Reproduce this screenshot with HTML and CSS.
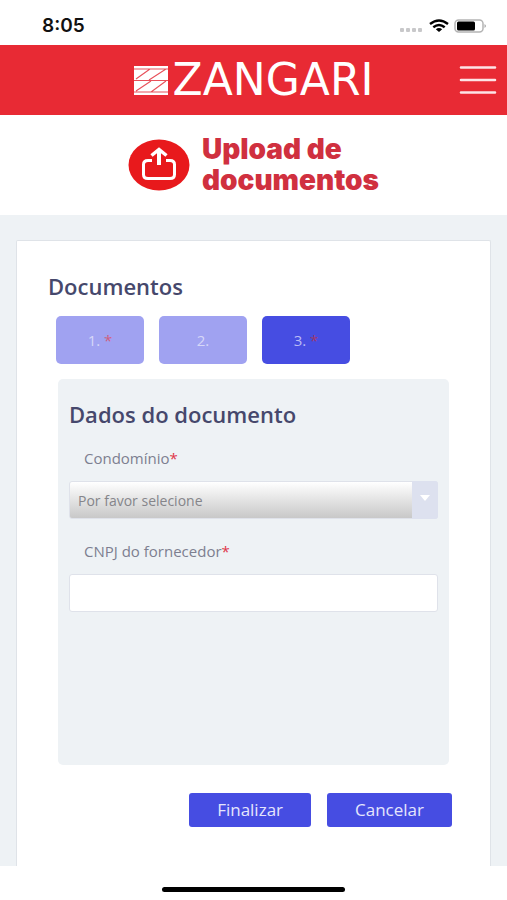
FILE: index.html
```html
<!DOCTYPE html>
<html lang="pt-BR">
<head>
<meta charset="utf-8">
<meta name="viewport" content="width=device-width, initial-scale=1">
<title>Upload de documentos</title>
<link rel="stylesheet" href="styles.css">
</head>
<body>
<div class="status">
  <span class="time">8:05</span>
  <div class="indicators">
    <svg width="24" height="5" viewBox="0 0 24 5" fill="#c8c8ca" aria-hidden="true"><rect x="0" width="4" height="4" rx="1"/><rect x="6" width="4" height="4" rx="1"/><rect x="12" width="4" height="4" rx="1"/><rect x="18" width="4" height="4" rx="1"/></svg>
    <svg class="wifi" width="20" height="14" viewBox="0 0 20 14" fill="none" stroke="#000" stroke-width="2.4" aria-hidden="true"><path d="M1 5Q10-2 19 5M4.3 8.2Q10 3.6 15.7 8.2"/><path d="M6.8 10.3Q10 7.8 13.2 10.3L10 13Z" fill="#000" stroke="none"/></svg>
    <svg width="33" height="14" viewBox="0 0 33 14" aria-hidden="true"><rect x="1" y="1" width="28" height="12" rx="3.5" fill="#fff" stroke="#b4b4b4" stroke-width="1.5"/><rect x="3" y="2.5" width="18" height="9" rx="1.5" fill="#000"/><path d="M30.5 5q3 2 0 4z" fill="#aaa"/></svg>
  </div>
</div>
<header class="header">
  <a class="logo" href="#">
    <svg width="34" height="29" viewBox="0 0 34 29" aria-hidden="true"><path fill="#fff" d="M0 0h34v29H0z"/><path d="M0 3h34M0 14.5h34M0 26h34M2 13L16 3M15 14L32 3M2 25L17 15M17 26L32 15" fill="none" stroke="#e8505a" stroke-width="1.1"/></svg>
    <span>ZANGARI</span>
  </a>
  <button class="menu" type="button" aria-label="Menu">
    <svg width="38" height="30" viewBox="0 0 38 30" stroke="#fde4e6" stroke-width="2.6" stroke-linecap="round" aria-hidden="true"><path d="M2 2.5h34M2 15h34M2 27.5h34"/></svg>
  </button>
</header>
<section class="hero">
  <svg width="62" height="52" viewBox="0 0 62 52" fill="none" stroke="#fff" aria-hidden="true"><ellipse cx="31" cy="26" rx="30.5" ry="25.5" fill="#e8191c" stroke="none"/><path d="M24 21.5h-4q-4.500 0-4.500 4v10q0 4 4.500 4h22q4.500 0 4.500-4v-10q0-4-4.500-4h-4" stroke-width="3"/><path d="M31 26V11" stroke-width="4"/><path d="M23.5 16.5L31 10.5l7.500 6" stroke-width="3.5"/></svg>
  <h1>Upload de<br>documentos</h1>
</section>
<main class="page">
  <form class="card">
    <h2>Documentos</h2>
    <div class="tabs">
      <button class="tab" type="button">1. <i>*</i></button>
      <button class="tab" type="button">2.</button>
      <button class="tab active" type="button">3. <i>*</i></button>
    </div>
    <section class="panel">
      <h2>Dados do documento</h2>
      <label for="condo">Condomínio<i>*</i></label>
      <div class="select">
        <select id="condo"><option>Por favor selecione</option></select>
        <span class="arrow"><svg width="10" height="6" viewBox="0 0 10 6" aria-hidden="true"><path fill="#fff" d="M0 0h10L5 6z"/></svg></span>
      </div>
      <label for="cnpj">CNPJ do fornecedor<i>*</i></label>
      <input id="cnpj" type="text">
    </section>
    <div class="actions">
      <button type="submit">Finalizar</button>
      <button type="button">Cancelar</button>
    </div>
  </form>
</main>
<footer class="home"><span></span></footer>
</body>
</html>
```
FILE: styles.css
```css
* { box-sizing: border-box; }
body {
  margin: 0;
  min-height: 100vh;
  display: flex;
  flex-direction: column;
  background: #fff;
  font-family: "Open Sans", sans-serif;
}
h1, h2 { margin: 0; }
button, input, select { font: inherit; }
i { font-style: normal; color: #e0354a; }
svg { display: block; }

.status {
  height: 45px;
  padding: 6px 20px 0 42px;
  display: flex;
  align-items: center;
  justify-content: space-between;
}
.time { font: 600 19px/24px Inter, sans-serif; color: #111; }
.indicators { display: flex; align-items: flex-end; gap: 5px; }

.header {
  height: 70px;
  padding: 0 10px;
  background: #e82a34;
  display: grid;
  grid-template-columns: 1fr auto 1fr;
  align-items: center;
}
.logo {
  grid-column: 2;
  display: flex;
  align-items: center;
  gap: 5px;
  color: #fff;
  font: 400 44px/52px "DejaVu Sans", sans-serif;
  text-decoration: none;
}
.menu { justify-self: end; padding: 0; border: 0; background: none; }

.hero {
  height: 100px;
  display: flex;
  align-items: center;
  justify-content: center;
  gap: 12px;
}
.hero h1 { font: 900 28px/31px Inter, sans-serif; color: #d0303f; }

.page {
  flex: 1;
  display: flex;
  padding: 25px 16px 0;
  background: #eef2f5;
}
.card {
  flex: 1;
  padding: 31px 38px 39px 31px;
  background: #fff;
  border: 1px solid #dfe3e8;
  border-bottom: 0;
  border-radius: 2px 2px 0 0;
  display: flex;
  flex-direction: column;
}
h2 { font-size: 22px; line-height: 28px; font-weight: 600; color: #46486c; }
.tabs { display: flex; gap: 15px; margin: 16px 8px 15px; }
.tab {
  width: 88px;
  height: 48px;
  border: 0;
  border-radius: 5px;
  background: #a0a2f1;
  color: #d6d7f8;
  font-size: 15px;
}
.tab i { color: #d0607f; }
.tab.active { background: #464de2; color: #b9bbf5; }
.tab.active i { color: #a0386c; }

.panel {
  flex: 1;
  margin: 0 3px 0 10px;
  padding: 21px 11px;
  border-radius: 5px;
  background: #eef2f5;
}
.panel label {
  display: block;
  margin: 20px 15px 13px;
  font-size: 15px;
  line-height: 20px;
  color: #7d7f90;
}
.select { position: relative; margin-bottom: 22px; }
.select select, .panel input {
  display: block;
  width: 100%;
  height: 38px;
  padding: 0 8px;
  border: 1px solid #dfe2ea;
  border-radius: 3px;
  background: #fff;
}
.select select {
  appearance: none;
  background: linear-gradient(#fff, #c8c8c8);
  color: #85858a;
  font-size: 14px;
}
.arrow {
  position: absolute;
  inset: 0 0 0 auto;
  width: 26px;
  display: grid;
  place-items: center;
  padding-bottom: 4px;
  background: #dde1ef;
  border-radius: 0 3px 3px 0;
  pointer-events: none;
}

.actions { display: flex; justify-content: flex-end; gap: 16px; margin-top: 28px; }
.actions button {
  height: 34px;
  padding: 0 28px;
  border: 0;
  border-radius: 3px;
  background: #464de2;
  color: #e4e5fc;
  font-size: 17px;
  line-height: 24px;
}
.home { height: 34px; display: grid; place-items: center; padding-top: 13px; }
.home span { width: 36%; height: 5px; border-radius: 3px; background: #000; }
```
